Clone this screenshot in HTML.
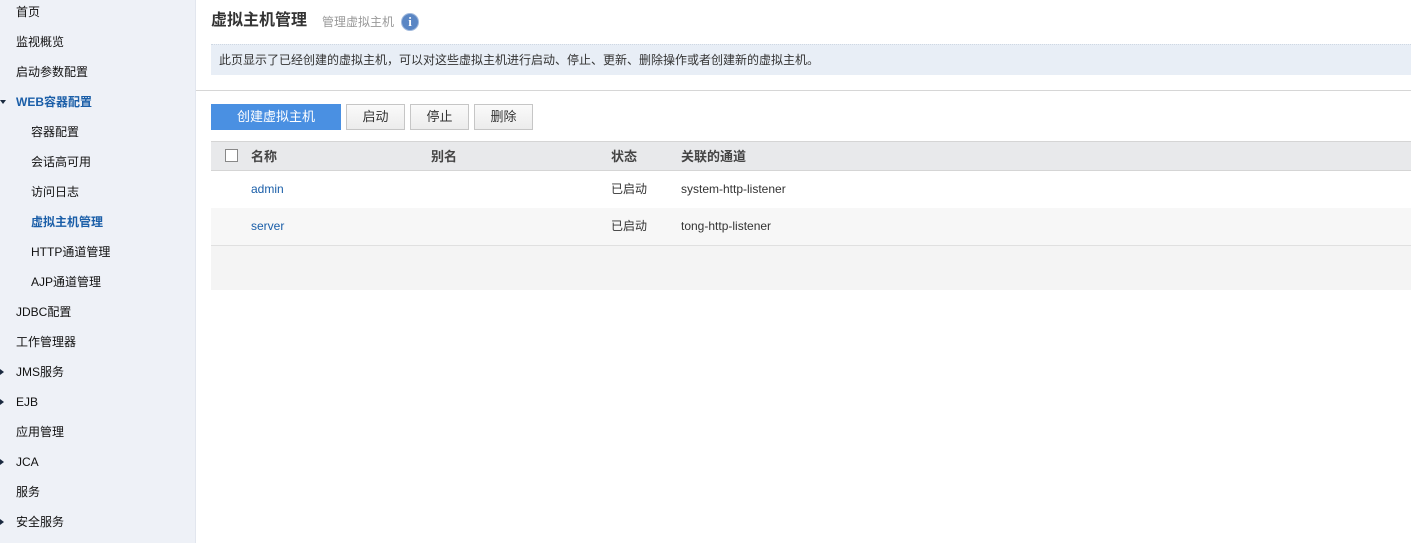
<!DOCTYPE html>
<html><head><meta charset="utf-8"><style>
*{margin:0;padding:0;box-sizing:border-box}
body{width:1411px;height:543px;overflow:hidden;background:#fff;font-family:"Liberation Sans","Noto Sans CJK SC",sans-serif;font-size:12px;color:#222;position:relative}
.side{position:absolute;left:0;top:0;width:196px;height:543px;background:#eef1f7;border-right:1px solid #e2e6ee}
.it{position:absolute;left:16px;height:20px;line-height:20px;font-size:12px;color:#111;white-space:nowrap}
.sub{left:31px}
.act{color:#1a5ea8;font-weight:bold}
.tri{position:absolute;left:0;width:0;height:0}
.tr{border-top:3px solid transparent;border-bottom:3px solid transparent;border-left:4px solid #1a2a40}
.td{border-left:3px solid transparent;border-right:3px solid transparent;border-top:4px solid #1a2a40}
.a{position:absolute;white-space:nowrap;line-height:16px}
.btn{position:absolute;top:104px;height:26px;line-height:24px;text-align:center;border:1px solid #c6c6c6;background:linear-gradient(#fafafa,#ececec);font-size:13px;color:#333}
</style></head><body>
<div class="side">
<div class="it" style="top:2px">首页</div>
<div class="it" style="top:32px">监视概览</div>
<div class="it" style="top:62px">启动参数配置</div>
<div class="tri td" style="top:100px"></div>
<div class="it act" style="top:92px">WEB容器配置</div>
<div class="it sub" style="top:122px">容器配置</div>
<div class="it sub" style="top:152px">会话高可用</div>
<div class="it sub" style="top:182px">访问日志</div>
<div class="it sub act" style="top:212px">虚拟主机管理</div>
<div class="it sub" style="top:242px">HTTP通道管理</div>
<div class="it sub" style="top:272px">AJP通道管理</div>
<div class="it" style="top:302px">JDBC配置</div>
<div class="it" style="top:332px">工作管理器</div>
<div class="tri tr" style="top:369px"></div>
<div class="it" style="top:362px">JMS服务</div>
<div class="tri tr" style="top:399px"></div>
<div class="it" style="top:392px">EJB</div>
<div class="it" style="top:422px">应用管理</div>
<div class="tri tr" style="top:459px"></div>
<div class="it" style="top:452px">JCA</div>
<div class="it" style="top:482px">服务</div>
<div class="tri tr" style="top:519px"></div>
<div class="it" style="top:512px">安全服务</div>
</div>
<div class="a" style="left:211px;top:11px;font-size:16px;line-height:20px;font-weight:bold;color:#333">虚拟主机管理</div>
<div class="a" style="left:322px;top:14px;font-size:12px;color:#999">管理虚拟主机</div>
<div class="a" style="left:401px;top:13px;width:18px;height:18px;border-radius:50%;background:#5a86c4;border:1px solid #9fb8dc;color:#fff;font-weight:bold;font-family:'Liberation Serif',serif;font-size:13px;text-align:center;line-height:16px">i</div>
<div class="a" style="left:211px;top:44px;width:1200px;height:31px;background:#e8eef6;border-top:1px dotted #cfd8e3;padding-left:8px;line-height:30px;color:#333">此页显示了已经创建的虚拟主机，可以对这些虚拟主机进行启动、停止、更新、删除操作或者创建新的虚拟主机。</div>
<div class="a" style="left:196px;top:90px;width:1215px;height:1px;background:#d6d6d6"></div>
<div class="btn" style="left:211px;width:130px;border-color:#4a90e2;background:#4a90e2;color:#fff">创建虚拟主机</div>
<div class="btn" style="left:346px;width:59px">启动</div>
<div class="btn" style="left:410px;width:59px">停止</div>
<div class="btn" style="left:474px;width:59px">删除</div>
<div class="a" style="left:211px;top:141px;width:1200px;height:30px;background:#e8e9eb;border-top:1px solid #d5d5d5;border-bottom:1px solid #d5d5d5"></div>
<div class="a" style="left:225px;top:149px;width:13px;height:13px;border:1px solid #888;background:#fff"></div>
<div class="a" style="left:251px;top:149px;font-weight:bold;color:#444;font-size:13px">名称</div>
<div class="a" style="left:431px;top:149px;font-weight:bold;color:#444;font-size:13px">别名</div>
<div class="a" style="left:611px;top:149px;font-weight:bold;color:#444;font-size:13px">状态</div>
<div class="a" style="left:681px;top:149px;font-weight:bold;color:#444;font-size:13px">关联的通道</div>
<div class="a" style="left:211px;top:208px;width:1200px;height:37px;background:#f7f7f7"></div>
<div class="a" style="left:211px;top:245px;width:1200px;height:45px;background:#f4f4f4;border-top:1px solid #e0e0e0"></div>
<div class="a" style="left:251px;top:181px;color:#1a5ea8">admin</div>
<div class="a" style="left:611px;top:181px;color:#333">已启动</div>
<div class="a" style="left:681px;top:181px;color:#333">system-http-listener</div>
<div class="a" style="left:251px;top:218px;color:#1a5ea8">server</div>
<div class="a" style="left:611px;top:218px;color:#333">已启动</div>
<div class="a" style="left:681px;top:218px;color:#333">tong-http-listener</div>
</body></html>
